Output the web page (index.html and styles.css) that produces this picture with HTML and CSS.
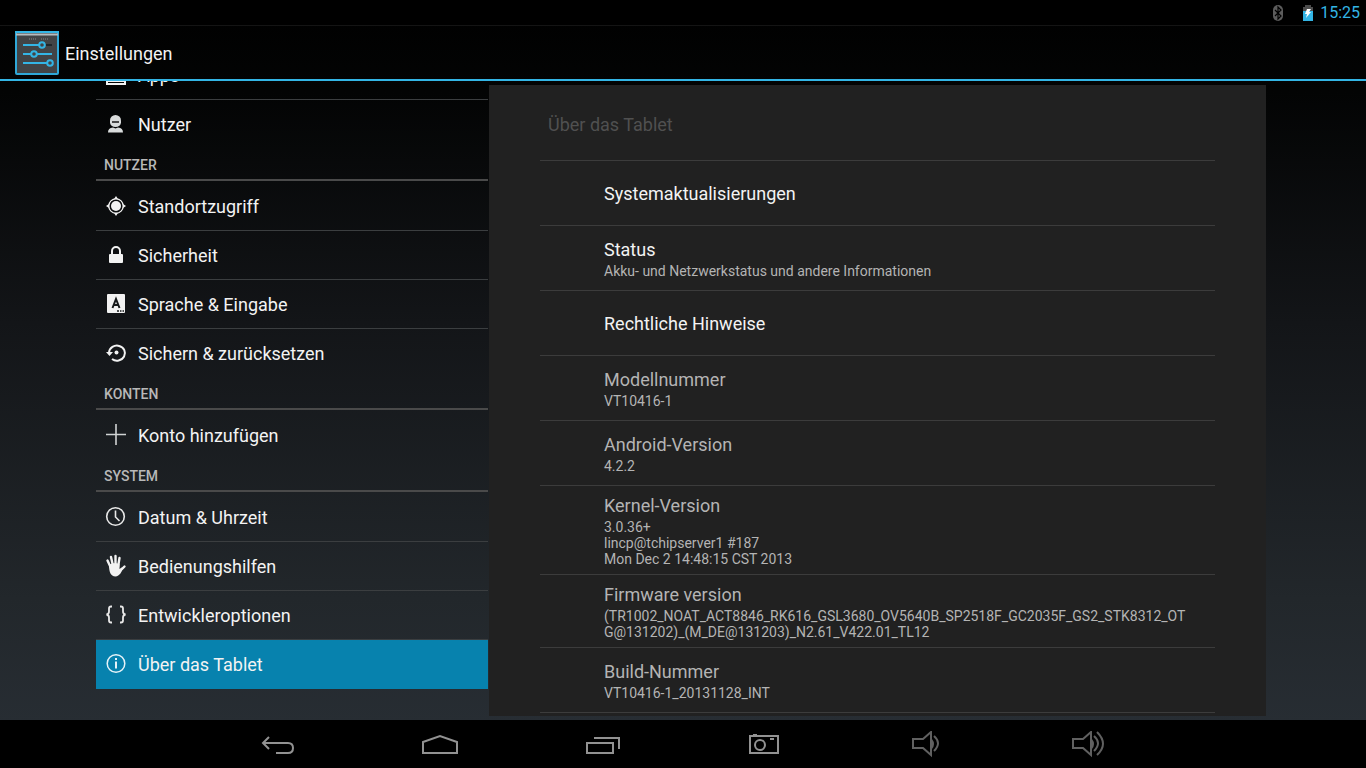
FILE: index.html
```html
<!DOCTYPE html>
<html lang="de">
<head>
    <meta charset="UTF-8">
    <meta name="viewport" content="width=device-width, initial-scale=1.0">
    <title>Einstellungen</title>
    <link rel="stylesheet" href="styles.css">
</head>
<body>

    <!-- Statusleiste -->
    <div class="statusbar">
        <svg class="bluetooth" width="12" height="16" viewBox="0 0 12 16">
            <rect x="1" y="0" width="10" height="16" rx="5" fill="#5c5c5c"/>
            <path d="M3 5l6 6-3 3V2l3 3-6 6" fill="none" stroke="#000" stroke-width="1.2"/>
        </svg>
        <svg class="battery" width="10" height="16" viewBox="0 0 10 16">
            <path d="M2 0h6v2h2v4H0V2h2z" fill="#4c4c4c"/>
            <path d="M0 6h10v10H0z" fill="#33b5e5"/>
            <path d="M4 4h4L6 7h2l-5 6 1-4H2z" fill="#fff"/>
        </svg>
        <span class="clock">15:25</span>
    </div>

    <header class="actionbar">
        <svg width="44" height="44" viewBox="0 0 44 44">
            <rect x="1" y="1" width="42" height="42" rx="1" fill="#424446" stroke="#2fa8d8" stroke-width="2"/>
            <path d="M0 1h44" stroke="#33b5e5" stroke-width="2"/>
            <path d="M1 3.500h42" stroke="#b5bcc0" stroke-width="2"/>
            <path d="M14 8h7M26 8h7" stroke="#85898c" stroke-dasharray="1 1"/>
            <path d="M31 14h6" stroke="#20262a" stroke-width="2"/>
            <path d="M8 14h16M8 23h8M22 23h15M8 32h24" stroke="#33b5e5" stroke-width="2"/>
            <g fill="#424446" stroke="#33b5e5" stroke-width="2">
                <circle cx="27" cy="14" r="2.800"/>
                <circle cx="19" cy="23" r="2.800"/>
                <circle cx="35" cy="32" r="2.800"/>
            </g>
        </svg>
        <h1>Einstellungen</h1>
    </header>

    <main class="content">
        <!-- Kategorien -->
        <nav class="sidebar">
            <div class="scrolled">
                <ul>
                    <li><a href="#apps">
                        <svg width="24" height="24" viewBox="0 0 24 24"><path d="M3 7h18v14H3zM3 18h18M7 7v11" fill="none" stroke="#f2f2f2" stroke-width="2"/></svg>
                        Apps</a></li>
                    <li><a href="#nutzer">
                        <svg width="24" height="24" viewBox="0 0 24 24" fill="#d9dcdc">
                            <path d="M6 8.500a5.500 5.500 0 0 1 11 0v2a5.500 4.500 0 0 1-11 0z"/>
                            <path d="M4 20.500c0-3 1.500-4.500 5-5l2.500 1 2.500-1c3.500.5 5 2 5 5z"/>
                            <path d="M8 10h7" stroke="#222" stroke-width="1.600"/>
                        </svg>
                        Nutzer</a></li>
                </ul>
                <h2>NUTZER</h2>
                <ul>
                    <li><a href="#standort">
                        <svg width="24" height="24" viewBox="0 0 24 24">
                            <circle cx="12" cy="12" r="7.200" fill="none" stroke="#f2f2f2" stroke-width="1.300"/>
                            <circle cx="12" cy="12" r="5" fill="#f2f2f2"/>
                            <path d="M12 2l2 3h-4zM12 22l2-3h-4zM2 12l3-2v4zM22 12l-3-2v4z" fill="#f2f2f2"/>
                        </svg>
                        Standortzugriff</a></li>
                    <li><a href="#sicherheit">
                        <svg width="24" height="24" viewBox="0 0 24 24">
                            <rect x="5" y="11" width="14" height="9" rx="1" fill="#f2f2f2"/>
                            <path d="M8 11V8a4 4 0 0 1 8 0v3" fill="none" stroke="#f2f2f2" stroke-width="2"/>
                        </svg>
                        Sicherheit</a></li>
                    <li><a href="#sprache">
                        <svg width="24" height="24" viewBox="0 0 24 24">
                            <rect x="3" y="2" width="18" height="19" rx="1" fill="#f2f2f2"/>
                            <path d="M8.500 16L12 7l3.500 9M9.500 13h5" fill="none" stroke="#15181a" stroke-width="2"/>
                            <path d="M13 19h2M16 19h1.500M18.500 19h1.500" stroke="#15181a" stroke-width="1.500"/>
                        </svg>
                        Sprache &amp; Eingabe</a></li>
                    <li><a href="#sichern">
                        <svg width="24" height="24" viewBox="0 0 24 24">
                            <path d="M5 11.500a8 7.500 0 1 1 3 6.500" fill="none" stroke="#f2f2f2" stroke-width="2"/>
                            <path d="M2 11h7l-3.500 4z" fill="#f2f2f2"/>
                            <circle cx="12.500" cy="11.500" r="2" fill="#f2f2f2"/>
                        </svg>
                        Sichern &amp; zurücksetzen</a></li>
                </ul>
                <h2>KONTEN</h2>
                <ul>
                    <li><a href="#konto">
                        <svg width="24" height="24" viewBox="0 0 24 24"><path d="M12 1v21M2 11.500h20" stroke="#d0d3d3" stroke-width="1.600"/></svg>
                        Konto hinzufügen</a></li>
                </ul>
                <h2>SYSTEM</h2>
                <ul>
                    <li><a href="#datum">
                        <svg width="24" height="24" viewBox="0 0 24 24" fill="none" stroke="#e8e8e8" stroke-width="1.600">
                            <circle cx="11.500" cy="11.500" r="8.800"/>
                            <path d="M11.500 5.500V12l4 4"/>
                        </svg>
                        Datum &amp; Uhrzeit</a></li>
                    <li><a href="#bedienung">
                        <svg width="24" height="24" viewBox="0 0 24 24">
                            <path d="M3.500 6.500L7 14M7 3l2 9M11.500 2v10M15.500 4L14 13M20.500 12.500L16 17" stroke="#f2f2f2" stroke-width="2.400" stroke-linecap="round"/>
                            <path d="M5 11c2-2 8-2 10.500-1v5l3-2c0 5-3 9-7 9.500-5 0-6.500-5-6.500-11.500z" fill="#f2f2f2"/>
                        </svg>
                        Bedienungshilfen</a></li>
                    <li><a href="#entwickler">
                        <svg width="24" height="24" viewBox="0 0 24 24" fill="none" stroke="#e8e8e8" stroke-width="1.800">
                            <path d="M8 3.500H7Q5 3.500 5 5.500v3q0 2.500-2.500 3 2.500.5 2.500 3v3q0 2 2 2h1M16 3.500h1q2 0 2 2v3q0 2.500 2.500 3-2.500.5-2.500 3v3q0 2-2 2h-1"/>
                        </svg>
                        Entwickleroptionen</a></li>
                    <li class="active"><a href="#tablet">
                        <svg width="24" height="24" viewBox="0 0 24 24" fill="none" stroke="#e6f3f8">
                            <circle cx="12" cy="11.500" r="8.800" stroke-width="1.500"/>
                            <path d="M12 6v2M12 9.500v7" stroke-width="2"/>
                        </svg>
                        Über das Tablet</a></li>
                </ul>
            </div>
        </nav>

        <!-- Über das Tablet -->
        <section class="panel">
            <h2>Über das Tablet</h2>
            <ul>
                <li><h3>Systemaktualisierungen</h3></li>
                <li><h3>Status</h3><p>Akku- und Netzwerkstatus und andere Informationen</p></li>
                <li><h3>Rechtliche Hinweise</h3></li>
                <li class="disabled"><h3>Modellnummer</h3><p>VT10416-1</p></li>
                <li class="disabled"><h3>Android-Version</h3><p>4.2.2</p></li>
                <li class="disabled"><h3>Kernel-Version</h3><p>3.0.36+<br>lincp@tchipserver1 #187<br>Mon Dec 2 14:48:15 CST 2013</p></li>
                <li class="disabled"><h3>Firmware version</h3><p>(TR1002_NOAT_ACT8846_RK616_GSL3680_OV5640B_SP2518F_GC2035F_GS2_STK8312_OT<br>G@131202)_(M_DE@131203)_N2.61_V422.01_TL12</p></li>
                <li class="disabled"><h3>Build-Nummer</h3><p>VT10416-1_20131128_INT</p></li>
            </ul>
        </section>
    </main>

    <!-- Navigationsleiste -->
    <footer class="navbar">
        <button type="button" aria-label="Zurück">
            <svg width="40" height="32" viewBox="0 0 40 32"><path d="M11 6l-6 6 6 6M5 12h25q5 0 5 5t-5 5H18" fill="none" stroke="#929292" stroke-width="2"/></svg>
        </button>
        <button type="button" aria-label="Startseite">
            <svg width="40" height="32" viewBox="0 0 40 32"><path d="M3 22V11l17-6 17 6v11z" fill="none" stroke="#929292" stroke-width="2"/></svg>
        </button>
        <button type="button" aria-label="Letzte Apps">
            <svg width="40" height="32" viewBox="0 0 40 32"><path d="M5 12h26v10H5zM12 7h25v11" fill="none" stroke="#929292" stroke-width="2"/></svg>
        </button>
        <button type="button" aria-label="Screenshot">
            <svg width="40" height="32" viewBox="0 0 40 32">
                <path d="M6 5h28v17H6z" fill="none" stroke="#929292" stroke-width="2"/>
                <circle cx="16" cy="14" r="5" fill="none" stroke="#929292" stroke-width="2"/>
                <path d="M9 4h4M26 8h4" stroke="#929292" stroke-width="2"/>
            </svg>
        </button>
        <button type="button" aria-label="Leiser">
            <svg width="40" height="32" viewBox="0 0 40 32">
                <path d="M7 8h10l8-7v23l-8-7H7z" fill="none" stroke="#606060" stroke-width="2"/>
                <path d="M26 8q4 5 0 10z" fill="#606060"/>
                <path d="M28 5q8 7 0 15" fill="none" stroke="#606060" stroke-width="2"/>
            </svg>
        </button>
        <button type="button" aria-label="Lauter">
            <svg width="40" height="32" viewBox="0 0 40 32">
                <path d="M5 8h10l8-7v23l-8-7H5z" fill="none" stroke="#606060" stroke-width="2"/>
                <path d="M24 8q4 5 0 10z" fill="#606060"/>
                <path d="M26 5q8 7 0 15M29 1q12 12 0 23" fill="none" stroke="#606060" stroke-width="2"/>
            </svg>
        </button>
    </footer>

</body>
</html>
```
FILE: styles.css
```css
* {
    box-sizing: border-box;
}

body {
    margin: 0;
    height: 100vh;
    display: flex;
    flex-direction: column;
    font-family: Roboto, sans-serif;
    color: #f3f3f3;
    background: linear-gradient(#000 0%, #030404 12%, #131518 42%, #22272b 78%, #272d33 94%);
}

h1, h2, h3, p, ul {
    margin: 0;
    padding: 0;
    font-weight: 400;
}

ul {
    list-style: none;
}

.statusbar {
    display: flex;
    justify-content: flex-end;
    align-items: center;
    height: 26px;
    padding-right: 6px;
    background: #000;
    border-bottom: 1px solid #141414;
}

.battery {
    margin: 0 7px 0 19px;
}

.clock {
    font-size: 16px;
    color: #33b5e5;
}

.actionbar {
    display: flex;
    align-items: center;
    gap: 6px;
    height: 55px;
    padding-left: 15px;
    border-bottom: 2px solid #33b5e5;
}

.actionbar h1 {
    padding-top: 2px;
    font-size: 18px;
}

.content {
    flex: 1;
    min-height: 0;
    display: grid;
    grid-template-columns: 392px 1fr;
    gap: 1px;
    padding: 0 100px 0 96px;
}

.sidebar {
    overflow: hidden;
}

/* Liste ist leicht nach unten gescrollt */
.scrolled {
    margin-top: -30px;
}

.sidebar li {
    height: 49px;
    border-bottom: 1px solid #3b3e40;
}

.sidebar li:last-child {
    border-bottom-color: transparent;
}

.sidebar a {
    display: flex;
    align-items: center;
    gap: 10px;
    height: 48px;
    padding-left: 8px;
    font-size: 18px;
    color: #f3f3f3;
    text-decoration: none;
}

.sidebar .active {
    background: #0782ae;
}

.sidebar h2 {
    height: 32px;
    margin-bottom: 1px;
    padding-left: 8px;
    font-size: 14px;
    font-weight: 500;
    line-height: 32px;
    color: #b8b8b8;
    border-bottom: 2px solid #4a4a4a;
}

.panel {
    margin: 4px 0;
    padding: 0 51px;
    overflow: hidden;
    background: #212121;
}

.panel h2 {
    height: 76px;
    padding: 4px 8px 0;
    font-size: 18px;
    line-height: 72px;
    color: #505050;
    border-bottom: 1px solid #3c3c3c;
}

.panel li {
    display: flex;
    flex-direction: column;
    justify-content: center;
    min-height: 65px;
    padding: 9px 0 7px 64px;
    border-bottom: 1px solid #3c3c3c;
}

.panel h3 {
    font-size: 18px;
    line-height: 22px;
}

.panel p {
    margin-top: 2px;
    font-size: 14px;
    line-height: 16px;
    color: #b4b4b4;
}

.panel .disabled {
    color: #b4b4b4;
}

.navbar {
    display: flex;
    height: 48px;
    padding: 6px 197px 0;
    background: #000;
}

.navbar button {
    flex: 1;
    display: flex;
    justify-content: center;
    align-items: center;
    padding: 0;
    background: none;
    border: none;
    cursor: pointer;
}
```
